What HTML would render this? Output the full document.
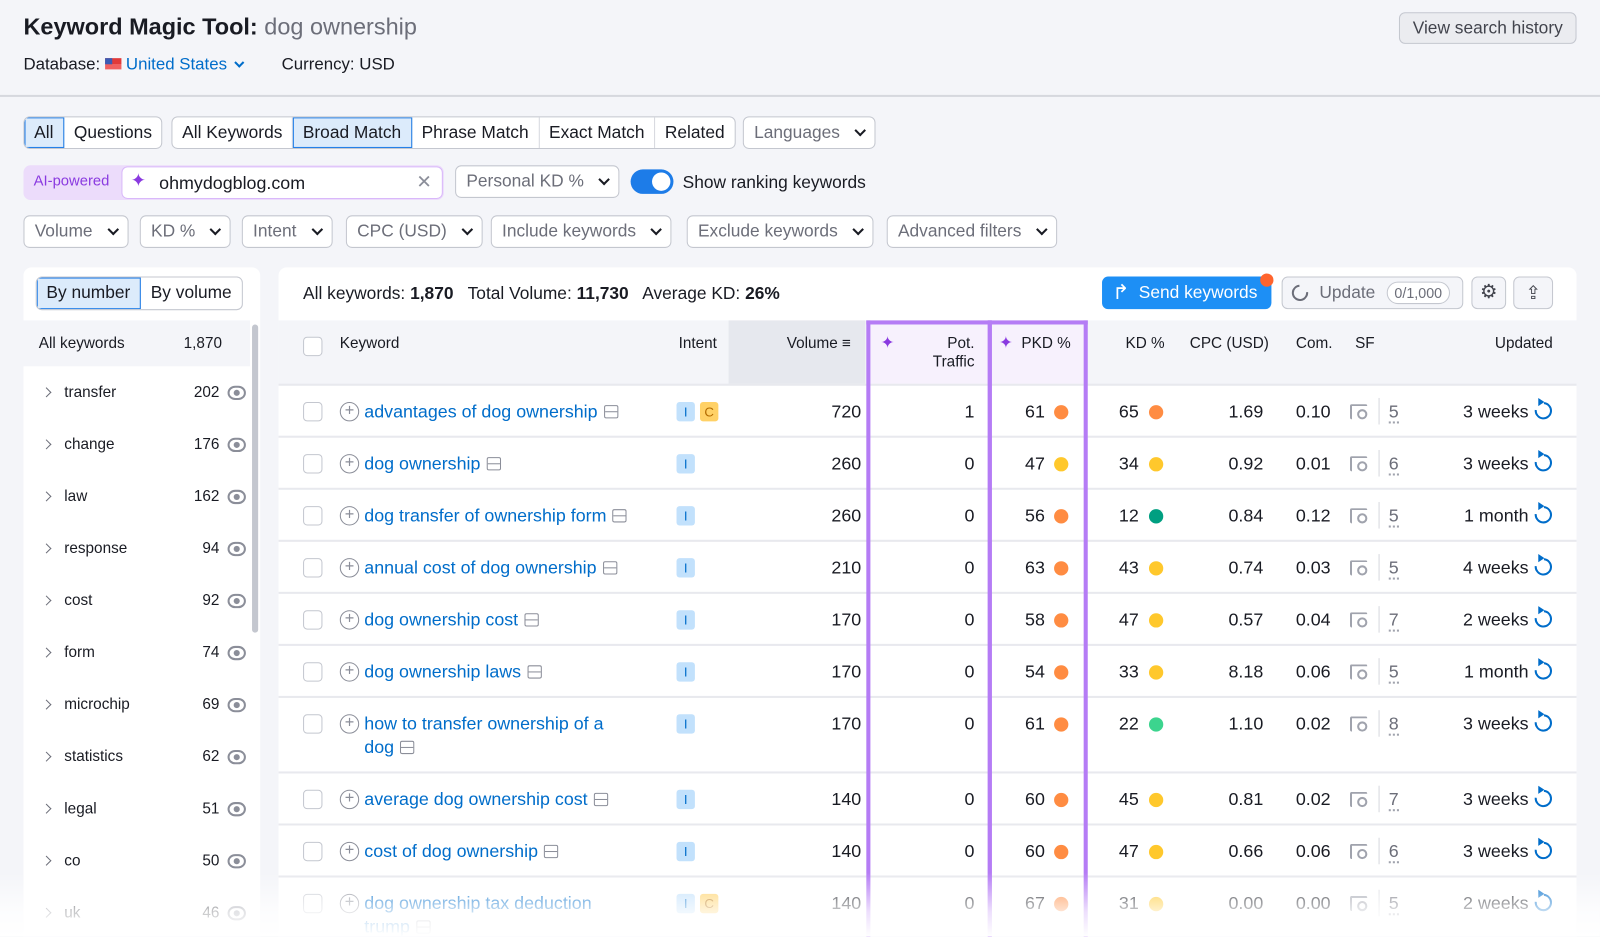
<!DOCTYPE html>
<html><head><meta charset="utf-8"><style>
*{box-sizing:border-box;margin:0;padding:0}
i{font-style:normal}
html,body{width:1600px;height:937px;overflow:hidden;background:#f4f5f9}
body{font-family:"Liberation Sans",sans-serif;color:#191b23}
#w{position:absolute;left:0;top:0;width:1568px;height:918px;overflow:hidden;transform:scale(1.0204);transform-origin:0 0;background:#f4f5f9}
.a{position:absolute;white-space:nowrap}
.btn{position:absolute;height:32px;border:1px solid #c4c7cf;border-radius:6px;background:#fff;font-size:17px;line-height:30px;padding:0 10px;color:#6c6e79}
.grp{position:absolute;height:32px;border:1px solid #c4c7cf;border-radius:6px;background:#fff;display:flex;overflow:hidden;font-size:17px;line-height:30px}
.grp span{padding:0 9.5px;border-right:1px solid #d6d8de}
.grp span:last-child{border-right:none}
.grp .on{background:#dcebfb;outline:1px solid #1d7ce8;outline-offset:-1px}
.chev{display:inline-block;width:8px;height:8px;border-right:2px solid #191b23;border-bottom:2px solid #191b23;transform:rotate(45deg);margin-left:16px;position:relative;top:-3px}
.panel{position:absolute;background:#fff;border-radius:8px}
.li{position:absolute;left:23px;width:222px;height:51px;font-size:15px}
.li .n{position:absolute;left:40px;top:17px}
.li .c{position:absolute;right:30px;top:17px}
.li .ar{position:absolute;left:19px;top:22px;width:7px;height:7px;border-right:1.5px solid #6c6e79;border-top:1.5px solid #6c6e79;transform:rotate(45deg)}
.eye{position:absolute;right:4px;top:19px;width:18px;height:14px;border:2px solid #8b8e99;border-radius:50%/60%}
.eye:after{content:"";position:absolute;left:4px;top:2px;width:6px;height:6px;border-radius:50%;background:#8b8e99}
.row{position:absolute;left:273px;width:1272px;border-bottom:2px solid #e8e9ee;font-size:17.5px}
.row .cb{position:absolute;left:24px;top:16px;width:19px;height:19px;border:1px solid #c4c7cf;border-radius:4px}
.row .pl{position:absolute;left:60px;top:16px;width:19px;height:19px;border:1.5px solid #8b8e99;border-radius:50%;color:#8b8e99;font-size:16px;line-height:15px;text-align:center}
.row .kw{position:absolute;left:84px;top:14px;color:#006dca;width:268px;line-height:23px;white-space:normal}
.sq{display:inline-block;width:14px;height:13px;border:1.5px solid #8b8e99;border-radius:2px;margin-left:6px;position:relative;top:1px}
.sq:after{content:"";position:absolute;left:0;right:0;top:5px;border-top:1.5px solid #8b8e99}
.tg{position:absolute;top:16px;width:18px;height:19px;border-radius:3px;font-size:13px;line-height:19px;text-align:center}
.ti{left:390px;background:#c2e1fc;color:#006dca}
.tc{left:413px;background:#ffd166;color:#b36b00}
.r{position:absolute;top:15px;text-align:right}
.dot{position:absolute;top:19px;width:14px;height:14px;border-radius:50%}
.sf{position:absolute;left:1050px;top:18px;width:17px;height:15px;border:2px solid #a0a3ad;border-right:none;border-bottom:none;border-radius:2px}
.sf:after{content:"";position:absolute;left:5px;top:3px;width:6px;height:6px;border:2px solid #a0a3ad;border-radius:50%}
.dv{position:absolute;left:1078px;top:12px;height:26px;border-left:1px solid #d6d8de}
.sn{position:absolute;left:1088px;top:15px;color:#6c6e79;border-bottom:2px dotted #a0a3ad;line-height:20px}
.up{position:absolute;left:1231px;top:16px;width:17px;height:17px;border:2.5px solid #006dca;border-top-color:transparent;border-radius:50%;transform:rotate(-40deg)}
.up:after{content:"";position:absolute;right:-4px;top:-4px;border:4px solid transparent;border-left:6px solid #006dca;transform:rotate(40deg)}
</style></head><body><div id="w">
<div class="a" style="left:23px;top:13px;font-size:23px;font-weight:bold">Keyword Magic Tool: <span style="font-weight:normal;color:#6c6e79">dog ownership</span></div>
<div class="a" style="left:23px;top:54px;font-size:16.5px">Database: <span style="display:inline-block;width:16px;height:11px;background:linear-gradient(#e03a3a 0 50%,#f06060 50%);position:relative;top:0"><span style="position:absolute;left:0;top:0;width:7px;height:6px;background:#3b5bb5"></span></span> <span style="color:#006dca">United States</span><span class="chev" style="border-color:#006dca;margin-left:9px;width:7px;height:7px"></span></div>
<div class="a" style="left:276px;top:54px;font-size:16.5px">Currency: USD</div>
<div class="a" style="left:1371px;top:12px;width:174px;height:31px;border:1px solid #c4c7cf;border-radius:6px;background:#ebecf0;font-size:17px;line-height:29px;text-align:center;color:#42444d">View search history</div>
<div class="a" style="left:0;top:93px;width:1568px;border-top:2px solid #d6d8de"></div>

<div class="grp" style="left:23px;top:114px"><span class="on">All</span><span>Questions</span></div>
<div class="grp" style="left:168px;top:114px"><span>All Keywords</span><span class="on">Broad Match</span><span>Phrase Match</span><span>Exact Match</span><span>Related</span></div>
<div class="btn" style="left:728px;top:114px">Languages<span class="chev"></span></div>

<div class="a" style="left:23px;top:162px;width:412px;height:34px;border-radius:7px;background:#ecdcfb"></div>
<div class="a" style="left:33px;top:170px;font-size:14.5px;color:#8a3ae0">AI-powered</div>
<div class="a" style="left:119px;top:163px;width:315px;height:32px;background:#fff;border:1px solid #d9b8fa;border-radius:6px"></div>
<div class="a" style="left:128px;top:167px;font-size:18px;color:#8a3ae0">✦</div>
<div class="a" style="left:156px;top:169px;font-size:17.5px">ohmydogblog.com</div>
<div class="a" style="left:408px;top:168px;font-size:18px;color:#8b8e99">✕</div>
<div class="btn" style="left:446px;top:162px">Personal KD %<span class="chev"></span></div>
<div class="a" style="left:618px;top:166px;width:42px;height:24px;border-radius:12px;background:#1d7ce8"><div style="position:absolute;right:3px;top:3px;width:18px;height:18px;border-radius:50%;background:#fff"></div></div>
<div class="a" style="left:669px;top:169px;font-size:17px">Show ranking keywords</div>

<div class="btn" style="left:23px;top:211px">Volume<span class="chev"></span></div>
<div class="btn" style="left:137px;top:211px">KD %<span class="chev"></span></div>
<div class="btn" style="left:237px;top:211px">Intent<span class="chev"></span></div>
<div class="btn" style="left:339px;top:211px">CPC (USD)<span class="chev"></span></div>
<div class="btn" style="left:481px;top:211px">Include keywords<span class="chev"></span></div>
<div class="btn" style="left:673px;top:211px">Exclude keywords<span class="chev"></span></div>
<div class="btn" style="left:869px;top:211px">Advanced filters<span class="chev"></span></div>

<div class="panel" style="left:23px;top:262px;width:232px;height:700px"></div>
<div class="grp" style="left:35px;top:271px;height:33px;font-size:17px"><span class="on">By number</span><span>By volume</span></div>
<div class="a" style="left:23px;top:314px;width:222px;height:45px;background:#f4f5f9"></div>
<div class="a" style="left:38px;top:328px;font-size:15px">All keywords</div>
<div class="a" style="left:180px;top:328px;font-size:15px">1,870</div>
<div class="a" style="left:247px;top:318px;width:6px;height:302px;border-radius:3px;background:#c4c7cf"></div>
<div class="li" style="top:359px"><i class="ar"></i><span class="n">transfer</span><span class="c">202</span><i class="eye"></i></div>
<div class="li" style="top:410px"><i class="ar"></i><span class="n">change</span><span class="c">176</span><i class="eye"></i></div>
<div class="li" style="top:461px"><i class="ar"></i><span class="n">law</span><span class="c">162</span><i class="eye"></i></div>
<div class="li" style="top:512px"><i class="ar"></i><span class="n">response</span><span class="c">94</span><i class="eye"></i></div>
<div class="li" style="top:563px"><i class="ar"></i><span class="n">cost</span><span class="c">92</span><i class="eye"></i></div>
<div class="li" style="top:614px"><i class="ar"></i><span class="n">form</span><span class="c">74</span><i class="eye"></i></div>
<div class="li" style="top:665px"><i class="ar"></i><span class="n">microchip</span><span class="c">69</span><i class="eye"></i></div>
<div class="li" style="top:716px"><i class="ar"></i><span class="n">statistics</span><span class="c">62</span><i class="eye"></i></div>
<div class="li" style="top:767px"><i class="ar"></i><span class="n">legal</span><span class="c">51</span><i class="eye"></i></div>
<div class="li" style="top:818px"><i class="ar"></i><span class="n">co</span><span class="c">50</span><i class="eye"></i></div>
<div class="li" style="top:869px"><i class="ar"></i><span class="n">uk</span><span class="c">46</span><i class="eye"></i></div>

<div class="panel" style="left:273px;top:262px;width:1272px;height:700px"></div>
<div class="a" style="left:297px;top:278px;font-size:17px">All keywords: <b>1,870</b> &nbsp; Total Volume: <b>11,730</b> &nbsp; Average KD: <b>26%</b></div>
<div class="a" style="left:1080px;top:271px;width:166px;height:32px;border-radius:6px;background:#1d8ff5;color:#fff;font-size:17px;line-height:32px;padding-left:36px">Send keywords</div>
<div class="a" style="left:1090px;top:277px;font-size:20px;color:#fff;line-height:20px">↱</div>
<div class="a" style="left:1235px;top:268px;width:13px;height:13px;border-radius:50%;background:#ff642d"></div>
<div class="a" style="left:1256px;top:271px;width:178px;height:32px;border:1px solid #c4c7cf;border-radius:6px;background:#f4f5f9;font-size:17px;line-height:30px;padding-left:36px;color:#6c6e79">Update <span style="display:inline-block;border:1px solid #c4c7cf;border-radius:12px;background:#fff;font-size:14px;line-height:20px;padding:0 7px;margin-left:6px">0/1,000</span></div>
<div class="a" style="left:1266px;top:279px;width:16px;height:16px;border:2.5px solid #6c6e79;border-top-color:transparent;border-radius:50%;transform:rotate(40deg)"></div>
<div class="a" style="left:1442px;top:271px;width:34px;height:32px;border:1px solid #c4c7cf;border-radius:6px;background:#f4f5f9;font-size:19px;line-height:30px;text-align:center;color:#42444d">⚙</div>
<div class="a" style="left:1483px;top:271px;width:39px;height:32px;border:1px solid #c4c7cf;border-radius:6px;background:#f4f5f9;font-size:18px;line-height:30px;text-align:center;color:#42444d">⇪</div>

<div class="a" style="left:273px;top:314px;width:1272px;height:64px;background:#f4f5f9;border-bottom:2px solid #e8e9ee;font-size:15px">
 <div class="a" style="left:24px;top:16px;width:19px;height:19px;border:1px solid #c4c7cf;border-radius:4px;background:#fff"></div>
 <div class="a" style="left:60px;top:14px">Keyword</div>
 <div class="a" style="left:392px;top:14px">Intent</div>
 <div class="a" style="left:441px;top:0;width:134px;height:62px;background:#e6e8ee"></div>
 <div class="a" style="left:498px;top:14px">Volume <span style="font-size:15px">≡</span></div>
 <div class="a" style="left:580px;top:4px;width:118px;height:58px;background:#f7f1fd"></div>
 <div class="a" style="left:698px;top:4px;width:94px;height:58px;background:#f7f1fd"></div>
 <div class="a" style="left:590px;top:12px;color:#8a3ae0;font-size:16px">✦</div>
 <div class="a" style="left:620px;top:14px;width:62px;text-align:right;line-height:18px">Pot.<br>Traffic</div>
 <div class="a" style="left:706px;top:12px;color:#8a3ae0;font-size:16px">✦</div>
 <div class="a" style="left:728px;top:14px">PKD %</div>
 <div class="a" style="left:830px;top:14px">KD %</div>
 <div class="a" style="left:893px;top:14px">CPC (USD)</div>
 <div class="a" style="left:997px;top:14px">Com.</div>
 <div class="a" style="left:1055px;top:14px">SF</div>
 <div class="a" style="left:1192px;top:14px">Updated</div>
</div>

<div id="rows"></div>
<script>
var d=[["advantages of dog ownership",1,720,1,61,"o",65,"o","1.69","0.10",5,"3 weeks",51],
["dog ownership",0,260,0,47,"y",34,"y","0.92","0.01",6,"3 weeks",51],
["dog transfer of ownership form",0,260,0,56,"o",12,"g","0.84","0.12",5,"1 month",51],
["annual cost of dog ownership",0,210,0,63,"o",43,"y","0.74","0.03",5,"4 weeks",51],
["dog ownership cost",0,170,0,58,"o",47,"y","0.57","0.04",7,"2 weeks",51],
["dog ownership laws",0,170,0,54,"o",33,"y","8.18","0.06",5,"1 month",51],
["how to transfer ownership of a dog",0,170,0,61,"o",22,"t","1.10","0.02",8,"3 weeks",74],
["average dog ownership cost",0,140,0,60,"o",45,"y","0.81","0.02",7,"3 weeks",51],
["cost of dog ownership",0,140,0,60,"o",47,"y","0.66","0.06",6,"3 weeks",51],
["dog ownership tax deduction trump",1,140,0,67,"o",31,"y","0.00","0.00",5,"2 weeks",74]];
var col={o:"#ff8c42",y:"#ffc82c",g:"#009f81",t:"#3cd48e"};
var y=378,h="";
d.forEach(function(r){
h+='<div class="row" style="top:'+y+'px;height:'+r[12]+'px"><i class="cb"></i><i class="pl">+</i><div class="kw">'+r[0]+'<i class="sq"></i></div><i class="tg ti">I</i>'+(r[1]?'<i class="tg tc">C</i>':'')+
'<div class="r" style="right:701px">'+r[2]+'</div><div class="r" style="right:590px">'+r[3]+'</div><div class="r" style="right:521px">'+r[4]+'</div><i class="dot" style="left:760px;background:'+col[r[5]]+'"></i>'+
'<div class="r" style="right:429px">'+r[6]+'</div><i class="dot" style="left:853px;background:'+col[r[7]]+'"></i><div class="r" style="right:307px">'+r[8]+'</div><div class="r" style="right:241px">'+r[9]+'</div><i class="sf"></i><i class="dv"></i><div class="sn">'+r[10]+'</div><div class="r" style="right:47px">'+r[11]+'</div><i class="up"></i></div>';
y+=r[12];});
document.getElementById("rows").innerHTML=h;
</script>
<div class="a" style="left:849px;top:314px;width:123px;height:620px;border:4px solid #b57cf5;border-bottom:none"></div>
<div class="a" style="left:968px;top:314px;width:98px;height:620px;border:4px solid #b57cf5;border-bottom:none"></div>
<div class="a" style="left:0;top:855px;width:1568px;height:63px;background:linear-gradient(rgba(255,255,255,0),rgba(255,255,255,.75) 60%,#fff)"></div>
</div></body></html>
